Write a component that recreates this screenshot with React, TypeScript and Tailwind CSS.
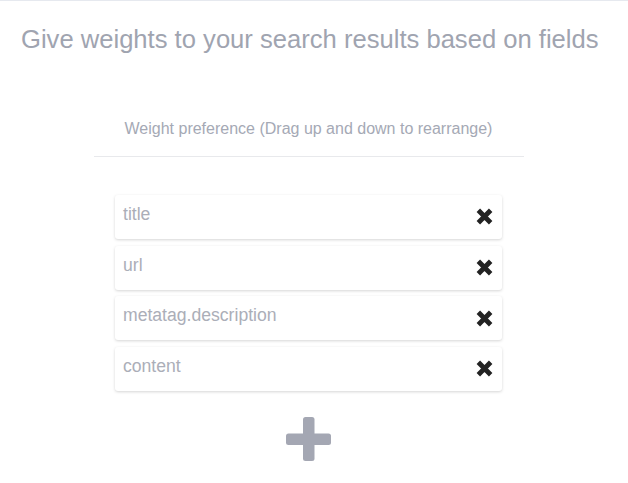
import React from 'react'

const fields = ['title', 'url', 'metatag.description', 'content']

function RemoveIcon() {
  return (
    <svg width="17" height="17" viewBox="0 0 16 16" className="shrink-0">
      <path d="M2.2 2.2 L13.8 13.8 M13.8 2.2 L2.2 13.8" stroke="#222222" strokeWidth="4.6" strokeLinecap="butt" />
    </svg>
  )
}

function PlusIcon() {
  return (
    <svg width="45" height="44" viewBox="0 0 45 44">
      <rect x="17" y="0" width="11.5" height="44" rx="2.5" fill="#a4a7b3" />
      <rect x="0" y="16.5" width="45" height="11.5" rx="2.5" fill="#a4a7b3" />
    </svg>
  )
}

export default function App() {
  return (
    <div className="min-h-screen bg-white border-t border-[#e6e9ef] font-['Liberation_Sans',Arial,sans-serif]">
      <div className="w-[617px]">
        {/* Encabezado */}
        <h1 className="pl-[21px] pt-[24px] text-[25.6px] leading-[1.15] font-normal text-[#a0a4b0]">
          Give weights to your search results based on fields
        </h1>

        <div className="mt-[66px] flex flex-col items-center">
          <p className="text-[16px] leading-[1.15] text-[#a5a9b5]">
            Weight preference (Drag up and down to rearrange)
          </p>
          <div className="mt-[17px] w-[430px] h-px bg-[#e8e9ec]" />

          {/* Lista de campos */}
          <ul className="mt-[38px] w-[387px] flex flex-col gap-[6.7px]">
            {fields.map((f) => (
              <li
                key={f}
                className="h-[44px] rounded-[3px] bg-white shadow-[0_1px_3px_rgba(0,0,0,0.17)] flex justify-between pl-[8px] pr-[9px]"
              >
                <span className="pt-[9px] text-[17.6px] leading-[1.15] text-[#abaeb8]">{f}</span>
                <span className="self-center">
                  <RemoveIcon />
                </span>
              </li>
            ))}
          </ul>

          <button className="mt-[26px]">
            <PlusIcon />
          </button>
        </div>
      </div>
    </div>
  )
}
